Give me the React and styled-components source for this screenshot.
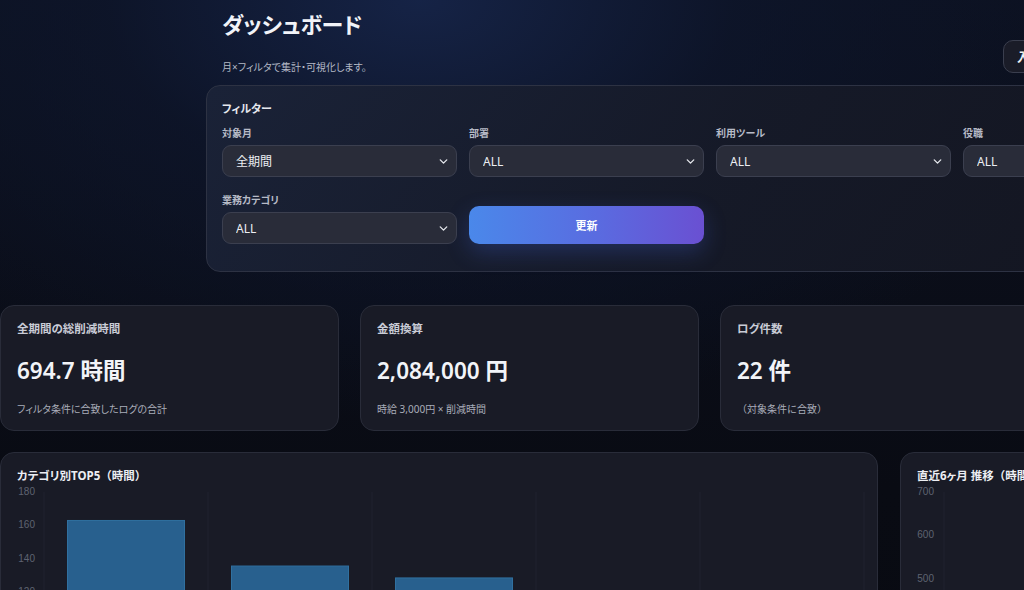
import React from "react";
import styled, { createGlobalStyle } from "styled-components";
import { ChevronDown } from "lucide-react";

const GlobalStyle = createGlobalStyle`
  html, body {
    margin: 0;
    padding: 0;
    overflow: hidden;
    background: #080a12;
  }
  body {
    min-height: 590px;
    background:
      radial-gradient(ellipse 700px 420px at 420px 0px, rgba(22, 36, 72, 0.95) 0%, rgba(14, 22, 44, 0.7) 45%, rgba(8, 10, 18, 0) 100%),
      linear-gradient(180deg, #0c1120 0%, #090b13 60%, #080a11 100%);
    font-family: "Noto Sans", "Noto Sans CJK JP", sans-serif;
    font-feature-settings: "palt";
    color: #e8eaf0;
  }
  * { box-sizing: border-box; }
`;

const Page = styled.div`
  width: 1240px;
  min-height: 590px;
`;

const Top = styled.section`
  margin-left: 206px;
  width: 1008px;
  padding-top: 9px;
`;

const Header = styled.header`
  display: flex;
  align-items: flex-start;
  width: 901px;
  padding: 0 16px;
`;

const TitleBlock = styled.div`
  display: flex;
  flex-direction: column;
`;

const Title = styled.h1`
  margin: 0;
  font-size: 22px;
  line-height: 30px;
  font-weight: 700;
  color: #f1f3f8;
  letter-spacing: -0.2px;
`;

const Subtitle = styled.p`
  margin: 21px 0 0;
  font-size: 10px;
  line-height: 14px;
  color: #b4b9c6;
`;

const GhostButton = styled.button`
  margin-left: auto;
  margin-top: 31px;
  height: 33px;
  padding: 0 13px;
  border-radius: 10px;
  border: 1px solid #3a3e4e;
  background: #1a1c28;
  color: #eef0f5;
  font-family: inherit;
  font-size: 12px;
  font-weight: 700;
  white-space: nowrap;
`;

const Panel = styled.div`
  margin-top: 11px;
  width: 1008px;
  padding: 15px 15px 27px;
  border-radius: 14px;
  border: 1px solid #2d3243;
  background: linear-gradient(120deg, rgba(27, 35, 56, 0.92) 0%, rgba(22, 26, 40, 0.92) 50%, rgba(20, 22, 33, 0.92) 100%);
`;

const PanelTitle = styled.div`
  font-size: 11px;
  line-height: 16px;
  font-weight: 700;
  color: #e6e8ee;
  margin-bottom: 9px;
`;

const FilterGrid = styled.div`
  display: grid;
  grid-template-columns: repeat(4, 235px);
  column-gap: 12px;
  row-gap: 16px;
`;

const Field = styled.label`
  display: flex;
  flex-direction: column;
  gap: 5px;
`;

const FieldLabel = styled.span`
  font-size: 10px;
  line-height: 14px;
  font-weight: 700;
  color: #b7bbc7;
`;

const SelectWrap = styled.div`
  position: relative;
  height: 32px;
`;

const Select = styled.select`
  appearance: none;
  width: 100%;
  height: 32px;
  padding: 0 26px 0 13px;
  border-radius: 9px;
  border: 1px solid #3b3f4f;
  background: #292c39;
  color: #eceef3;
  font-family: inherit;
  font-size: 12px;
  outline: none;
`;

const Chevron = styled(ChevronDown)`
  position: absolute;
  right: 7px;
  top: 10px;
  color: #e4e6ec;
  pointer-events: none;
`;

const UpdateButton = styled.button`
  align-self: end;
  height: 38px;
  border: none;
  border-radius: 10px;
  background: linear-gradient(90deg, #4a88ea 0%, #5a6be0 55%, #6a50d2 100%);
  box-shadow: 0 8px 22px rgba(70, 100, 220, 0.28);
  color: #ffffff;
  font-family: inherit;
  font-size: 11px;
  font-weight: 700;
`;

const KpiGrid = styled.section`
  margin-top: 33px;
  display: grid;
  grid-template-columns: repeat(3, 339px);
  gap: 21px;
`;

const Card = styled.div`
  border-radius: 14px;
  border: 1px solid #292c39;
  background: #191b26;
  padding: 15px 16px;
  height: ${(p) => p.$h}px;
`;

const KpiLabel = styled.div`
  font-size: 11.5px;
  line-height: 16px;
  font-weight: 700;
  color: #c9ccd6;
`;

const KpiValue = styled.div`
  margin-top: 19px;
  font-size: 22.5px;
  line-height: 30px;
  font-weight: 600;
  color: #f2f4f8;
`;

const KpiSub = styled.div`
  margin-top: 16px;
  font-size: 10px;
  line-height: 14px;
  color: #a9adb9;
`;

const Wide = styled.span`
  font-feature-settings: normal;
`;

const ChartGrid = styled.section`
  margin-top: 21px;
  display: grid;
  grid-template-columns: 878px 340px;
  gap: 22px;
`;

const ChartTitle = styled.div`
  font-size: 11.5px;
  line-height: 16px;
  font-weight: 700;
  color: #eceef3;
`;

const ChartSvg = styled.svg`
  display: block;
  margin: 0 -16px;
  font-family: "Liberation Sans", Arial, sans-serif;
  font-size: 10px;
`;

const filters = [
  { label: "対象月", value: "全期間" },
  { label: "部署", value: "ALL" },
  { label: "利用ツール", value: "ALL" },
  { label: "役職", value: "ALL" },
  { label: "業務カテゴリ", value: "ALL" },
];

const kpis = [
  { label: "全期間の総削減時間", value: "694.7 時間", sub: "フィルタ条件に合致したログの合計" },
  { label: "金額換算", value: "2,084,000 円", sub: "時給 3,000円 × 削減時間" },
  { label: "ログ件数", value: "22 件", sub: <Wide>（対象条件に合致）</Wide> },
];

const categories = [163, 135.8, 128.7, 104.2, 62.5];

const BarChart = () => {
  const y = (v) => 8 + (180 - v) * 1.675;
  const ticks = [180, 160, 140, 120, 100, 80, 60, 40, 20, 0];
  const lines = [0, 1, 2, 3, 4, 5].map((i) => 43 + i * 164);
  return (
    <ChartSvg width="876" height="320">
      {lines.map((x) => (
        <line key={x} x1={x} x2={x} y1={8} y2={y(0)} stroke="#20232e" strokeWidth="1" />
      ))}
      {ticks.map((t) => (
        <text key={t} x="34" y={y(t)} textAnchor="end" dominantBaseline="middle" fill="#5e6371">
          {t}
        </text>
      ))}
      {categories.map((v, i) => (
        <rect
          key={i}
          x={43 + i * 164 + 23.5}
          y={y(v)}
          width="117"
          height={y(0) - y(v)}
          fill="#28608e"
          stroke="#30709f"
          strokeWidth="1"
        />
      ))}
    </ChartSvg>
  );
};

const trend = [98, 121, 105, 132, 118, 120.7];

const LineChart = () => {
  const y = (v) => 8 + (700 - v) * 0.435;
  const ticks = [700, 600, 500, 400, 300, 200, 100, 0];
  const pts = trend.map((v, i) => `${60 + i * 52},${y(v)}`).join(" ");
  return (
    <ChartSvg width="338" height="320">
      <line x1="43" x2="43" y1="8" y2={y(0)} stroke="#20232e" />
      {ticks.map((t) => (
        <text key={t} x="33" y={y(t)} textAnchor="end" dominantBaseline="middle" fill="#5e6371">
          {t}
        </text>
      ))}
      <polyline points={pts} fill="none" stroke="#3d8bd0" strokeWidth="2" />
    </ChartSvg>
  );
};

export default function App() {
  return (
    <Page>
      <GlobalStyle />
      <Top>
        <Header>
          <TitleBlock>
            <Title>ダッシュボード</Title>
            <Subtitle>月×フィルタで集計・可視化します。</Subtitle>
          </TitleBlock>
          <GhostButton>入力画面へ</GhostButton>
        </Header>
        <Panel>
          <PanelTitle>フィルター</PanelTitle>
          <FilterGrid>
            {filters.map((f) => (
              <Field key={f.label}>
                <FieldLabel>{f.label}</FieldLabel>
                <SelectWrap>
                  <Select defaultValue={f.value}>
                    <option>{f.value}</option>
                  </Select>
                  <Chevron size={13} strokeWidth={2.5} />
                </SelectWrap>
              </Field>
            ))}
            <UpdateButton>更新</UpdateButton>
          </FilterGrid>
        </Panel>
      </Top>
      <KpiGrid>
        {kpis.map((k) => (
          <Card key={k.label} $h={126}>
            <KpiLabel>{k.label}</KpiLabel>
            <KpiValue>{k.value}</KpiValue>
            <KpiSub>{k.sub}</KpiSub>
          </Card>
        ))}
      </KpiGrid>
      <ChartGrid>
        <Card $h={360}>
          <ChartTitle>
            カテゴリ別TOP5<Wide>（時間）</Wide>
          </ChartTitle>
          <BarChart />
        </Card>
        <Card $h={360}>
          <ChartTitle>
            直近6ヶ月 推移<Wide>（時間）</Wide>
          </ChartTitle>
          <LineChart />
        </Card>
      </ChartGrid>
    </Page>
  );
}
